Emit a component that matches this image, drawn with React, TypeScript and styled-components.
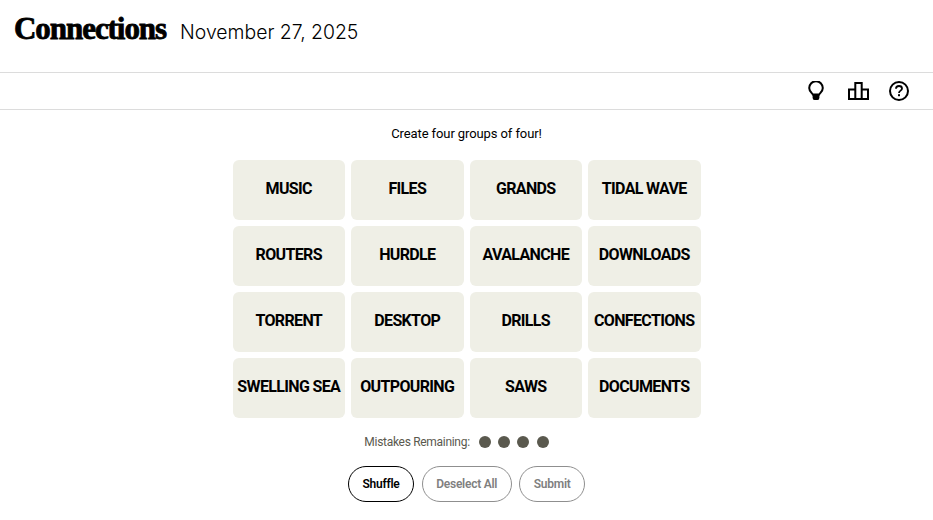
import React from "react";
import styled, { createGlobalStyle } from "styled-components";

const Global = createGlobalStyle`
  html, body { margin: 0; padding: 0; background: #fff; }
  body { font-family: "Roboto", "Liberation Sans", sans-serif; color: #000; overflow: hidden; }
`;
const Page = styled.div`
  width: 933px;
  height: 520px;
  display: flex;
  flex-direction: column;
`;
const Header = styled.header`
  box-sizing: border-box;
  border-bottom: 1px solid #dcdcdc;
  height: 73px;
  display: flex;
  align-items: flex-start;
  padding: 12px 0 0 14px;
  gap: 14px;
`;
const Title = styled.h1`
  margin: 0;
  font-family: "Liberation Serif", serif;
  font-weight: 700;
  font-size: 31px;
  line-height: 34px;
  letter-spacing: -1.05px;
  -webkit-text-stroke: 0.8px #000;
`;
const DateText = styled.span`
  font-family: "Inter", "Liberation Sans", sans-serif;
  font-weight: 300;
  font-size: 19.4px;
  line-height: 40px;
`;
const Toolbar = styled.div`
  height: 37px;
  box-sizing: border-box;
  border-bottom: 1px solid #dcdcdc;
  display: flex;
  justify-content: flex-end;
  align-items: center;
  gap: 20px;
  padding: 0 24px 1px 0;
`;
const Main = styled.main`
  display: flex;
  flex-direction: column;
  align-items: center;
`;
const Prompt = styled.p`
  margin: 15px 0 0;
  height: 35px;
  font-size: 13px;
  line-height: 18px;
  letter-spacing: -0.1px;
  font-weight: 400;
`;
const Grid = styled.div`
  width: 468px;
  display: grid;
  grid-template-columns: repeat(4, 1fr);
  grid-auto-rows: 60px;
  gap: 6px;
`;
const Tile = styled.button`
  all: unset;
  box-sizing: border-box;
  display: flex;
  align-items: center;
  justify-content: center;
  padding-bottom: 4px;
  background: #efefe6;
  border-radius: 6px;
  font-family: "Roboto", "Liberation Sans", sans-serif;
  font-weight: 700;
  font-size: 16px;
  letter-spacing: -0.65px;
  white-space: nowrap;
  color: #000;
`;
const Mistakes = styled.div`
  margin-top: 15px;
  height: 18px;
  padding-right: 20px;
  display: flex;
  align-items: center;
  font-size: 12px;
  letter-spacing: -0.3px;
  color: #5a594e;
`;
const Dots = styled.div`
  display: flex;
  gap: 7.3px;
  margin-left: 9px;
`;
const Dot = styled.span`
  width: 12px;
  height: 12px;
  border-radius: 50%;
  background: #5a594e;
`;
const Actions = styled.div`
  margin-top: 15px;
  display: flex;
  gap: 7.7px;
`;
const Pill = styled.button<{ $active?: boolean; $w: number }>`
  all: unset;
  box-sizing: border-box;
  height: 36px;
  width: ${(p) => p.$w}px;
  display: flex;
  align-items: center;
  justify-content: center;
  padding-bottom: 1px;
  border-radius: 18px;
  border: 1px solid ${(p) => (p.$active ? "#000" : "#8f8f8f")};
  color: ${(p) => (p.$active ? "#000" : "#7f7f7f")};
  font-size: 12px;
  font-weight: 600;
  letter-spacing: -0.25px;
`;

const words = [
  "MUSIC", "FILES", "GRANDS", "TIDAL WAVE",
  "ROUTERS", "HURDLE", "AVALANCHE", "DOWNLOADS",
  "TORRENT", "DESKTOP", "DRILLS", "CONFECTIONS",
  "SWELLING SEA", "OUTPOURING", "SAWS", "DOCUMENTS",
];

const Bulb = () => (
  <svg width="20" height="20" viewBox="2 0 20 20" fill="none">
    <path d="M6.8 13.6 C6.4 12 3.2 10.6 3.2 7 A6.8 6.8 0 0 1 16.8 7 C16.8 10.6 13.6 12 13.2 13.6 Z" stroke="#000" strokeWidth="2" />
    <path d="M6.6 13.5 H13.4 V16.5 Q13.4 19 11.5 19 H8.5 Q6.6 19 6.6 16.5 Z" fill="#000" />
  </svg>
);
const Stats = () => (
  <svg width="21" height="18" viewBox="0 0 21 18" fill="none" stroke="#000" strokeWidth="2">
    <path d="M1 17 V7.5 H7.3 V17 Z M7.3 17 V1 H13.7 V17 Z M13.7 17 V7.5 H20 V17 Z" />
  </svg>
);
const Help = () => (
  <svg width="20" height="20" viewBox="0 0 20 20" fill="none">
    <circle cx="10" cy="10" r="9" stroke="#000" strokeWidth="2" />
    <path d="M7 7.8 C7 5.9 8.4 5 10 5 C11.7 5 13 6 13 7.5 C13 9.6 10 9.7 10 12" stroke="#000" strokeWidth="1.8" />
    <rect x="9" y="13.2" width="2" height="2" fill="#000" />
  </svg>
);

export default function App() {
  return (
    <Page>
      <Global />
      <Header>
        <Title>Connections</Title>
        <DateText>November 27, 2025</DateText>
      </Header>
      <Toolbar>
        <Bulb />
        <Stats />
        <Help />
      </Toolbar>
      <Main>
        <Prompt>Create four groups of four!</Prompt>
        <Grid>
          {words.map((w) => (
            <Tile key={w}>{w}</Tile>
          ))}
        </Grid>
        <Mistakes>
          Mistakes Remaining:
          <Dots>
            <Dot /><Dot /><Dot /><Dot />
          </Dots>
        </Mistakes>
        <Actions>
          <Pill $active $w={66.4}>Shuffle</Pill>
          <Pill $w={89.7}>Deselect All</Pill>
          <Pill $w={66}>Submit</Pill>
        </Actions>
      </Main>
    </Page>
  );
}
